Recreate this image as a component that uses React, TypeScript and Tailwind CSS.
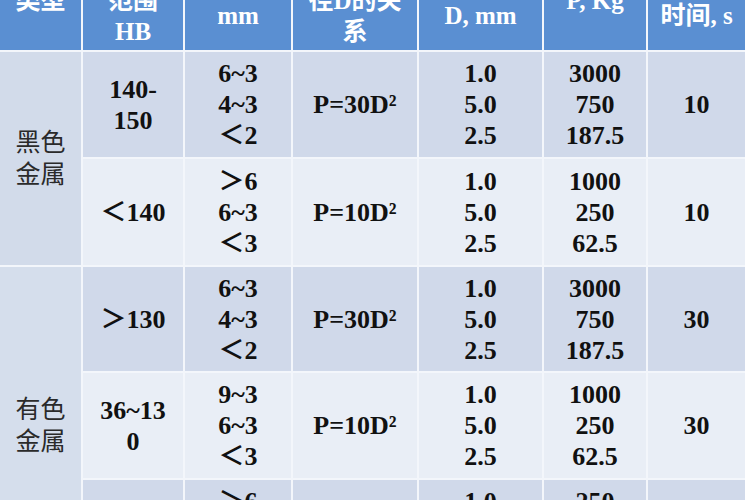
import React from "react";

type Row = {
  hb: string[];
  thick: string[];
  rel: string;
  dia: string[];
  load: string[];
  time: string;
  dark: boolean;
};

const header: string[][] = [
  ["类型"],
  ["硬度", "范围", "HB"],
  ["试样厚度", "mm"],
  ["P与钢球直", "径D的关", "系"],
  ["钢球直径", "D, mm"],
  ["载荷", "P, Kg", "\u00a0"],
  ["保持", "时间, s"],
];

const rows: Row[] = [
  { hb: ["140-", "150"], thick: ["6~3", "4~3", "＜2"], rel: "P=30D²", dia: ["1.0", "5.0", "2.5"], load: ["3000", "750", "187.5"], time: "10", dark: true },
  { hb: ["＜140"], thick: ["＞6", "6~3", "＜3"], rel: "P=10D²", dia: ["1.0", "5.0", "2.5"], load: ["1000", "250", "62.5"], time: "10", dark: false },
  { hb: ["＞130"], thick: ["6~3", "4~3", "＜2"], rel: "P=30D²", dia: ["1.0", "5.0", "2.5"], load: ["3000", "750", "187.5"], time: "30", dark: true },
  { hb: ["36~13", "0"], thick: ["9~3", "6~3", "＜3"], rel: "P=10D²", dia: ["1.0", "5.0", "2.5"], load: ["1000", "250", "62.5"], time: "30", dark: false },
  { hb: ["＜36"], thick: ["＞6", "6~3", "＜3"], rel: "P=2.5D²", dia: ["1.0", "5.0", "2.5"], load: ["250", "62.5", "15.6"], time: "60", dark: true },
];

function Cell({ lines, dark }: { lines: string[]; dark: boolean }) {
  return (
    <div
      className={`flex flex-col items-center justify-center text-center text-[26px] font-bold leading-[31px] text-[#111] whitespace-nowrap ${
        dark ? "bg-[#d0d9ea]" : "bg-[#e9eef6]"
      }`}
    >
      {lines.map((l, i) => (
        <span key={i}>{l}</span>
      ))}
    </div>
  );
}

export default function App() {
  return (
    <div className="h-[500px] w-[750px] overflow-hidden bg-white font-['Liberation_Serif','Times_New_Roman','Noto_Sans_CJK_SC',serif]">
      <div className="-mt-[50px] grid w-[745px] grid-cols-[81px_100px_106px_124px_123px_102px_97px] grid-rows-[100px_105px_106px_104px_105px_105px] gap-[2px] bg-[#f3f6fb]">
        <div className="col-start-1 row-start-2 row-span-2 flex flex-col items-center justify-center bg-[#d2dbea] text-[25px] leading-[32px] text-[#2a2a2a]">
          <span>黑色</span>
          <span>金属</span>
        </div>
        <div className="col-start-1 row-start-4 row-span-3 flex flex-col items-center justify-center bg-[#d5deec] text-[25px] leading-[32px] text-[#2a2a2a]">
          <span>有色</span>
          <span>金属</span>
        </div>

        {header.map((h, i) => (
          <div
            key={i}
            className="flex flex-col items-center justify-center bg-[#5a8fd2] text-center text-[25px] font-bold leading-[31px] text-white whitespace-nowrap"
          >
            {h.map((l, j) => (
              <span key={j}>{l}</span>
            ))}
          </div>
        ))}

        {rows.map((r, i) => (
          <React.Fragment key={i}>
            <Cell lines={r.hb} dark={r.dark} />
            <Cell lines={r.thick} dark={r.dark} />
            <Cell lines={[r.rel]} dark={r.dark} />
            <Cell lines={r.dia} dark={r.dark} />
            <Cell lines={r.load} dark={r.dark} />
            <Cell lines={[r.time]} dark={r.dark} />
          </React.Fragment>
        ))}
      </div>
    </div>
  );
}
